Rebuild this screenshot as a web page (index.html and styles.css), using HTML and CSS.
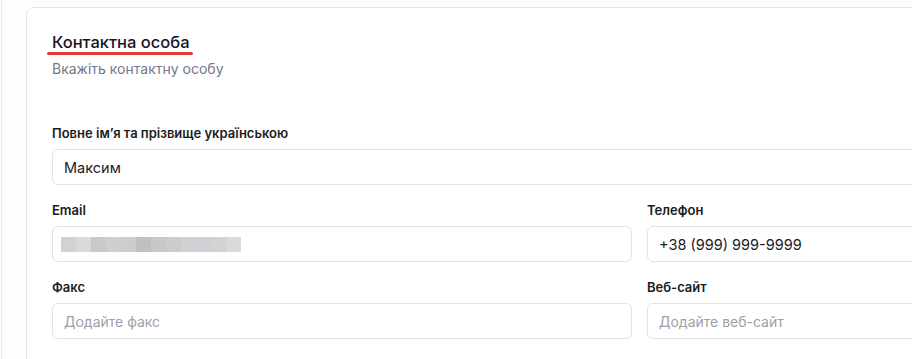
FILE: index.html
```html
<!DOCTYPE html>
<html lang="uk">
<head>
    <meta charset="UTF-8">
    <meta name="viewport" content="width=device-width, initial-scale=1.0">
    <title>Контактна особа</title>
    <link rel="stylesheet" href="styles.css">
</head>
<body>
    <div class="page">
        <div class="contact-card">
            <div class="section-head">
                <h2 class="section-title">Контактна особа</h2>
                <p class="section-subtitle">Вкажіть контактну особу</p>
            </div>

            <div class="form-grid">
                <div class="field field-wide">
                    <label class="field-label">Повне ім’я та прізвище українською</label>
                    <div class="field-input">Максим</div>
                </div>
                <div class="field">
                    <label class="field-label">Email</label>
                    <div class="field-input">
                        <span class="blur-mask">
                            <span></span><span></span><span></span><span></span>
                            <span></span><span></span><span></span><span></span>
                            <span></span><span></span><span></span><span></span>
                        </span>
                    </div>
                </div>
                <div class="field">
                    <label class="field-label">Телефон</label>
                    <div class="field-input">+38 (999) 999-9999</div>
                </div>
                <div class="field">
                    <label class="field-label">Факс</label>
                    <div class="field-input placeholder">Додайте факс</div>
                </div>
                <div class="field">
                    <label class="field-label">Веб-сайт</label>
                    <div class="field-input placeholder">Додайте веб-сайт</div>
                </div>
            </div>
        </div>
    </div>
</body>
</html>
```

FILE: styles.css
```css
html, body {
    margin: 0;
    padding: 0;
    height: 100%;
}
body {
    background-color: #fdfdfd;
    font-family: Inter, "Noto Sans", Arial, sans-serif;
    color: #1c1c24;
    overflow: hidden;
}
.page {
    padding: 7px 0 0 24px;
    border-left: 1px solid #ececec;
    margin-left: 1px;
    height: 100%;
    box-sizing: border-box;
}
.contact-card {
    width: 1228px;
    background-color: #fff;
    border: 1px solid #e4e4e6;
    border-radius: 8px;
    padding: 24px 25px 40px 25px;
}
.section-head {
    margin-bottom: 47px;
}
.section-title {
    display: inline-block;
    margin: 0;
    font-size: 16.5px;
    font-weight: 500;
    line-height: 20px;
    color: #16161e;
    padding: 0 0 2px 0;
    position: relative;
}
.section-title::after {
    content: "";
    position: absolute;
    left: -5px;
    right: -3px;
    bottom: -1px;
    height: 3px;
    border-radius: 2px;
    background-color: #e5383b;
}
.section-subtitle {
    margin: 6px 0 0 0;
    font-size: 14px;
    line-height: 18px;
    color: #737886;
}
.form-grid {
    display: grid;
    grid-template-columns: 580px 580px;
    column-gap: 15px;
    row-gap: 17px;
}
.field-wide {
    grid-column: 1 / 3;
}
.field-label {
    display: block;
    font-size: 13px;
    font-weight: 600;
    line-height: 16px;
    color: #1b1b22;
    margin-bottom: 8px;
}
.field-input {
    height: 34px;
    border: 1px solid #e2e2e6;
    border-radius: 6px;
    padding: 0 11px;
    display: flex;
    align-items: center;
    font-size: 14.5px;
    color: #1c1c24;
    background-color: #fff;
}
.field-input.placeholder {
    font-size: 14px;
    color: #9da0a8;
}
.blur-mask {
    display: flex;
    margin-left: -3px;
}
.blur-mask span {
    width: 15px;
    height: 15px;
    background-color: #d2d2d2;
}
.blur-mask span:nth-child(2) { background-color: #d9d9d8; }
.blur-mask span:nth-child(3) { background-color: #c9c9ca; }
.blur-mask span:nth-child(4) { background-color: #cdd0d3; }
.blur-mask span:nth-child(5) { background-color: #cfcdcb; }
.blur-mask span:nth-child(6) { background-color: #bfc0c2; }
.blur-mask span:nth-child(7) { background-color: #cac8c6; }
.blur-mask span:nth-child(8) { background-color: #cdcccb; }
.blur-mask span:nth-child(9) { background-color: #d0d1d4; }
.blur-mask span:nth-child(10) { background-color: #cfd0d3; }
.blur-mask span:nth-child(11) { background-color: #d3d3d4; }
.blur-mask span:nth-child(12) { background-color: #d9dbda; }
```
